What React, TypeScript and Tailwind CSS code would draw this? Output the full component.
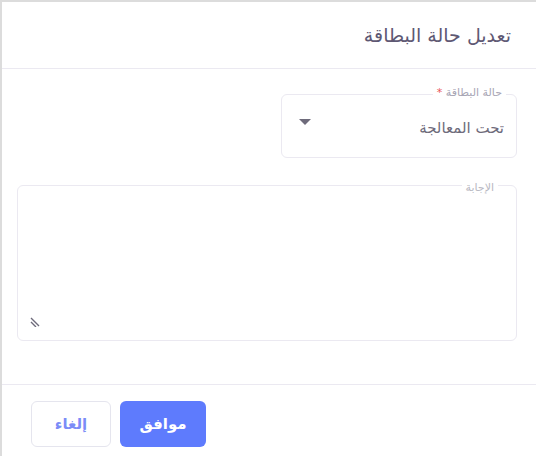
import React from 'react';

const App: React.FC = () => {
  return (
    <div
      dir="rtl"
      className="w-[536px] h-[456px] bg-white border-t-2 border-l-2 border-[#dcdcdc] flex flex-col text-[#5e5873]"
      style={{ fontFamily: '"DejaVu Sans", "Noto Sans", sans-serif' }}
    >
      {/* Header */}
      <div className="h-[67px] flex items-center pr-[25px] pl-6 border-b border-[#ebe9f1]">
        <h2 className="text-[19px] text-[#5e5873]">تعديل حالة البطاقة</h2>
      </div>

      {/* Body */}
      <div className="flex-1 flex flex-col gap-[27px] pt-[25px] pr-[19px] pl-[15px]">
        {/* Select */}
        <div className="relative w-[236px] h-[64px] border border-[#ebe9f1] rounded-md flex items-center justify-between pr-[12px] pl-[17px]">
          <span className="absolute -top-[8px] right-[10px] bg-white px-1 text-[11px] text-[#a8a6b5] leading-none">
            حالة البطاقة <span className="text-[#ea5455]">*</span>
          </span>
          <span className="text-[15px] text-[#6e6b7b] mt-1">تحت المعالجة</span>
          <svg width="12" height="7" viewBox="0 0 12 7" className="-mt-2">
            <path d="M0 0 L12 0 L6 6 Z" fill="#6e6b7b" />
          </svg>
        </div>

        {/* Textarea */}
        <div className="relative h-[156px] border border-[#ebe9f1] rounded-md">
          <span className="absolute -top-[4px] right-[18px] bg-white px-1 text-[11px] text-[#b9b9c3] leading-none">
            الإجابة
          </span>
          <svg width="12" height="12" viewBox="0 0 12 12" className="absolute left-[12px] bottom-[13px]">
            <path d="M1 3 L9 11 M1 7 L6 12" stroke="#6e6b7b" strokeWidth="1.4" />
          </svg>
        </div>
      </div>

      {/* Footer */}
      <div className="h-[72px] border-t border-[#ebe9f1] flex items-start justify-end gap-[9px] pt-[16px] pl-[29px]">
        <button className="w-[86px] h-[46px] rounded-md bg-[#5e7bfd] text-white text-[15px] font-bold">
          موافق
        </button>
        <button className="w-[80px] h-[46px] rounded-md border border-[#e5e5ee] text-[#7b8cf7] text-[15px] font-bold bg-white">
          إلغاء
        </button>
      </div>
    </div>
  );
};

export default App;
